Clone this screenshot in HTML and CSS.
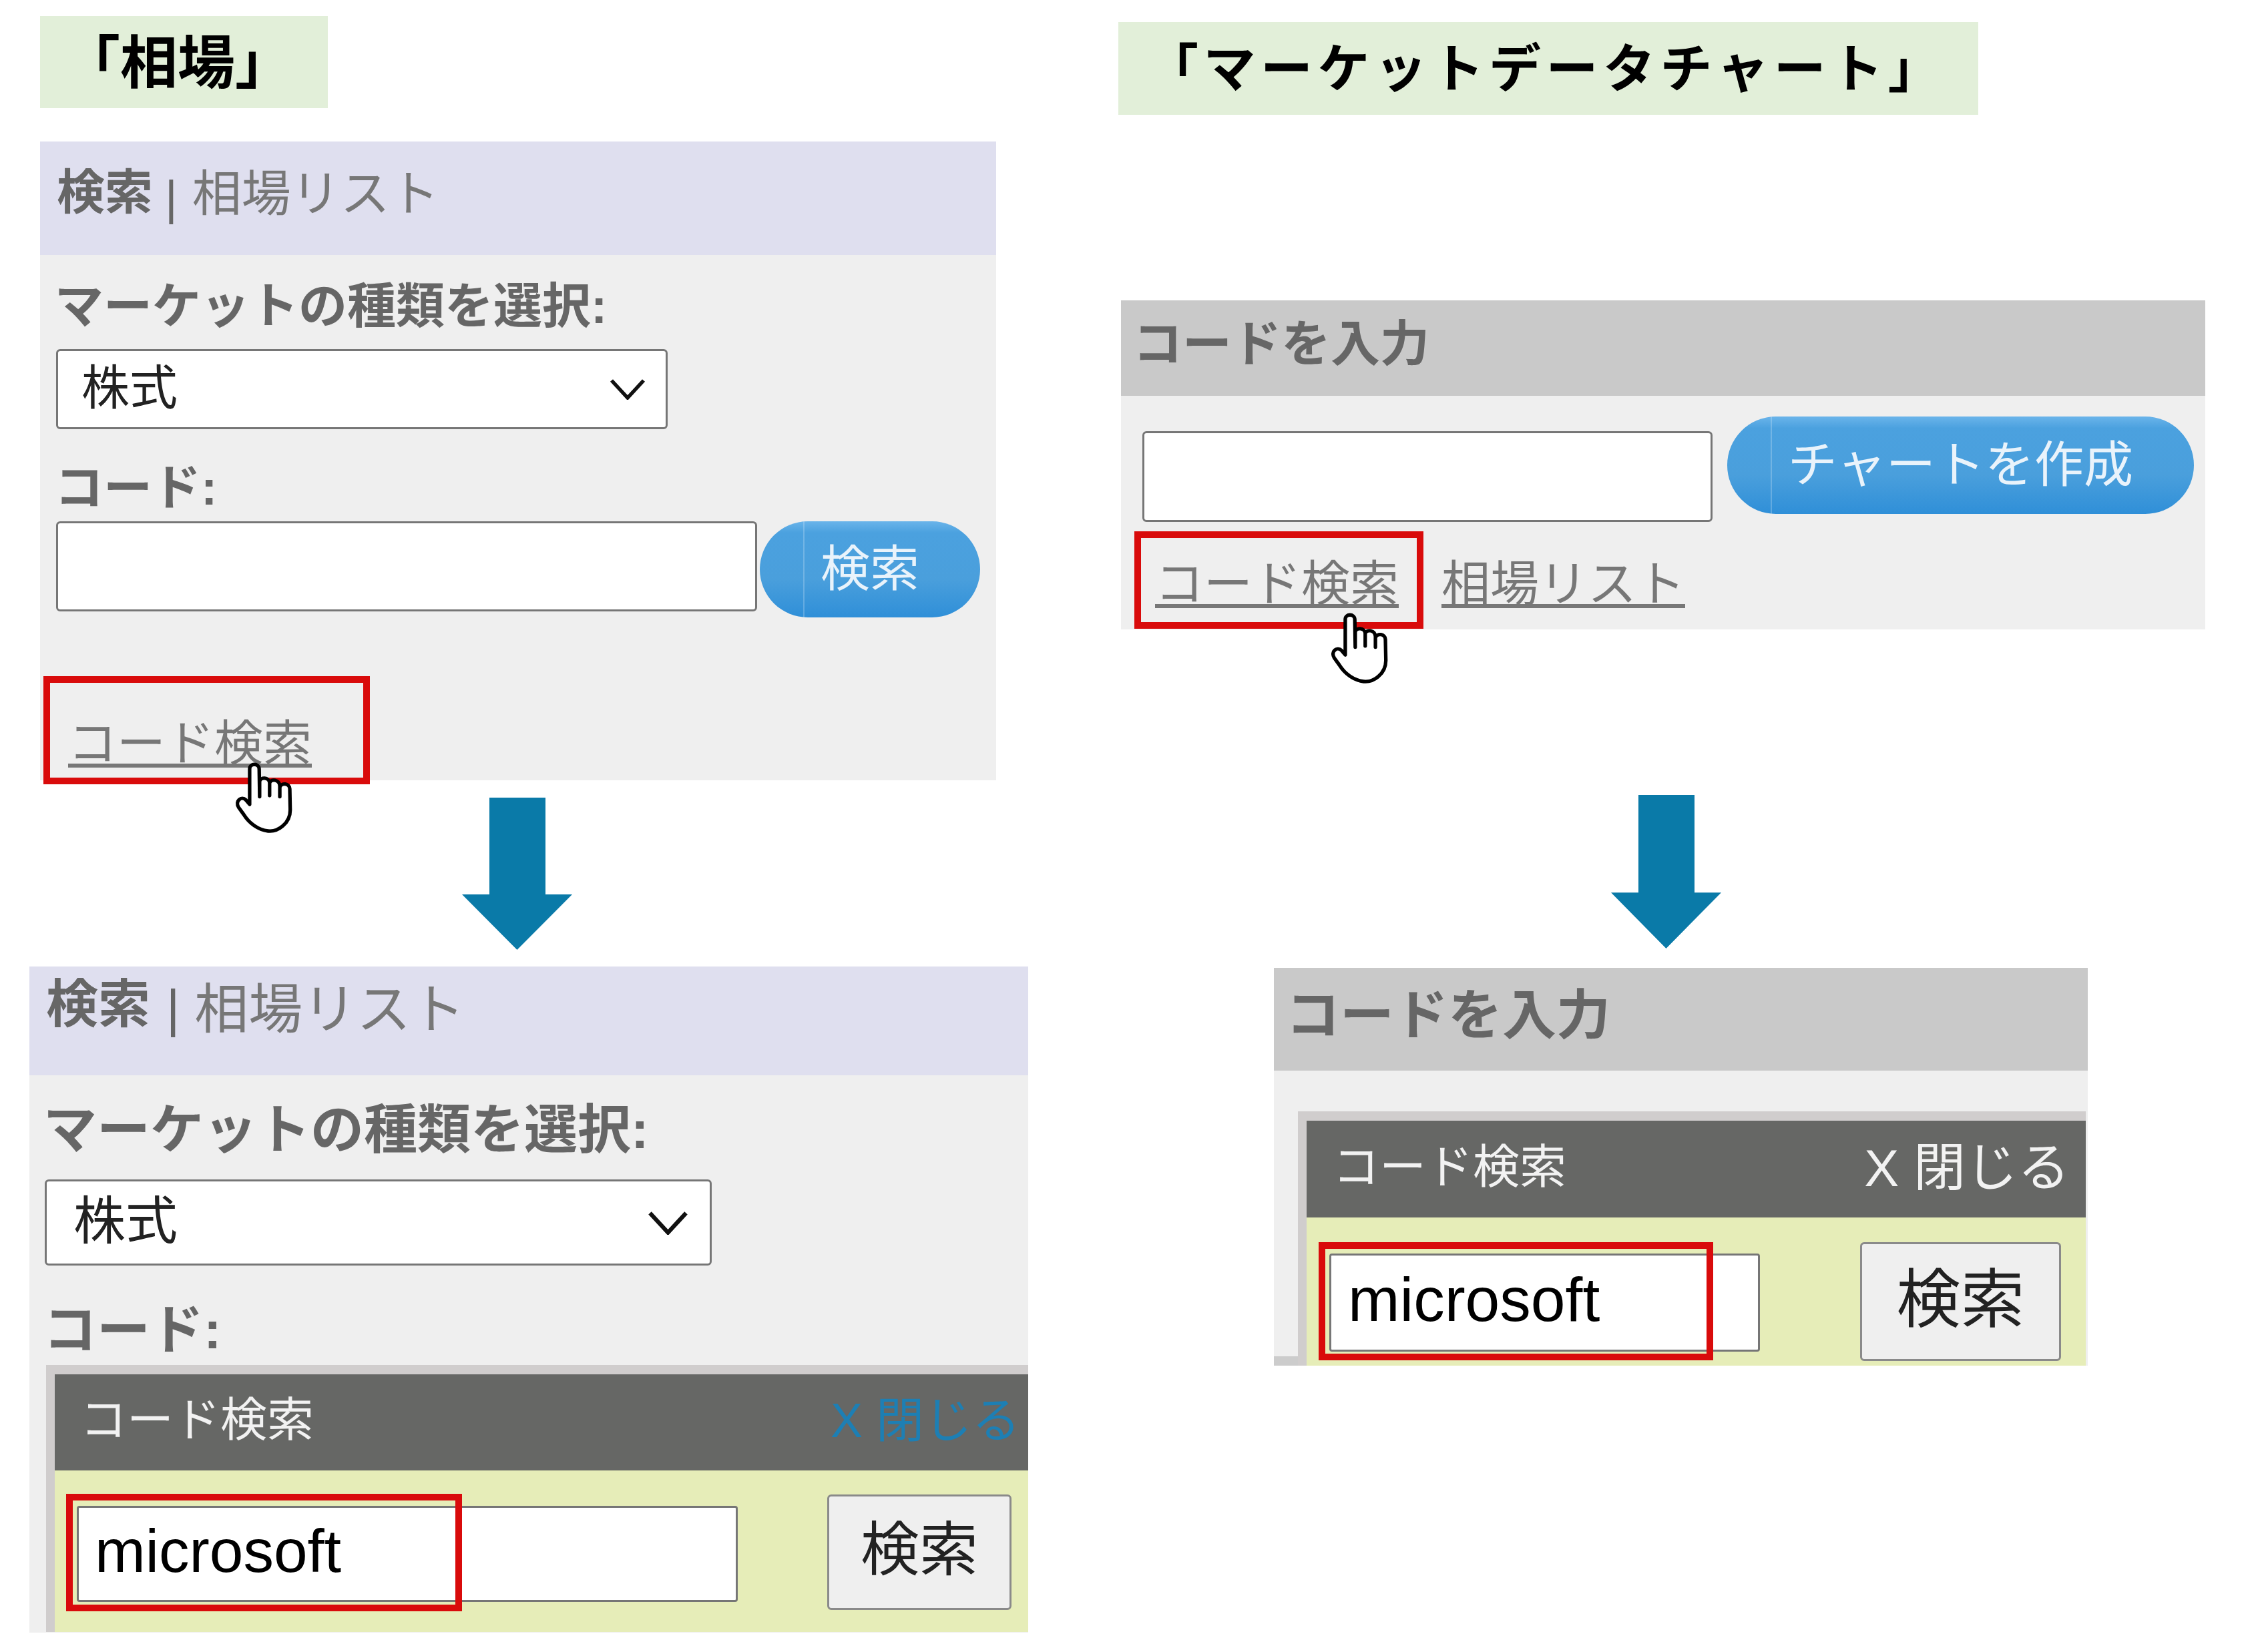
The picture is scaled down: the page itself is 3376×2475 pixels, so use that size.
FILE: index.html
```html
<!DOCTYPE html>
<html lang="ja">
<head>
<meta charset="utf-8">
<title>コード検索</title>
<link rel="stylesheet" href="styles.css">
</head>
<body>
<svg class="defs" width="0" height="0" aria-hidden="true">
  <symbol id="hand" viewBox="150 180 280 335">
    <path d="M222 375 L222 215 C222 188 264 188 265 215 L267 340 L267 272 C270 250 310 252 312 278 L312 335 L312 278 C318 258 356 262 358 292 L358 340 L358 298 C365 275 402 280 403 305 L405 400 C405 460 350 500 305 495 C260 490 220 460 195 420 L172 388 C155 360 185 335 205 355 Z" fill="#fff" stroke="#000" stroke-width="16" stroke-linejoin="round" stroke-linecap="round"/>
  </symbol>
  <symbol id="chevron" viewBox="0 0 54 32">
    <path d="M3 3 L27 29 L51 3" fill="none" stroke="#111" stroke-width="5.5"/>
  </symbol>
  <symbol id="arrow" viewBox="0 0 165 228" preserveAspectRatio="none">
    <path d="M41 0 H125 V145 H165 L82.500 228 L0 145 H41 Z" fill="#0a7aa8"/>
  </symbol>
</svg>
<main class="page">
  <section class="col">
    <h1 class="title title-a">「相場」</h1>

    <div class="panel panel-a">
      <div class="tabs tabs-a"><strong>検索</strong><span class="sep">|</span><span class="list">相場リスト</span></div>
      <div class="label label-a1">マーケットの種類を選択:</div>
      <div class="select select-a"><span>株式</span><svg class="chev"><use href="#chevron"/></svg></div>
      <div class="label label-a2">コード:</div>
      <div class="row">
        <input class="input input-a" type="text" aria-label="コード">
        <button class="pill pill-a" type="button">検索</button>
      </div>
      <div class="links links-a"><a class="link" href="#">コード検索</a></div>
      <div class="red red-a"></div>
      <svg class="hand hand-a"><use href="#hand"/></svg>
    </div>

    <svg class="arrow arrow-a"><use href="#arrow"/></svg>

    <div class="panel panel-b">
      <div class="tabs tabs-b"><strong>検索</strong><span class="sep">|</span><span class="list">相場リスト</span></div>
      <div class="label label-b1">マーケットの種類を選択:</div>
      <div class="select select-b"><span>株式</span><svg class="chev chev-b"><use href="#chevron"/></svg></div>
      <div class="label label-b2">コード:</div>
      <div class="modal modal-b">
        <div class="modal-head head-b"><span>コード検索</span><span class="close close-blue">X 閉じる</span></div>
        <div class="modal-body body-b">
          <div class="field field-b">microsoft</div>
          <button class="plain plain-b" type="button">検索</button>
        </div>
      </div>
      <div class="red red-b"></div>
    </div>
  </section>

  <section class="col">
    <h1 class="title title-c">「マーケットデータチャート」</h1>

    <div class="panel panel-c">
      <div class="bar bar-c">コードを入力</div>
      <div class="row row-c">
        <input class="input input-c" type="text" aria-label="コード">
        <button class="pill pill-c" type="button">チャートを作成</button>
      </div>
      <div class="links links-c"><a class="link" href="#">コード検索</a><a class="link" href="#">相場リスト</a></div>
      <div class="red red-c"></div>
      <svg class="hand hand-c"><use href="#hand"/></svg>
    </div>

    <svg class="arrow arrow-d"><use href="#arrow"/></svg>

    <div class="panel panel-d">
      <div class="bar bar-d">コードを入力</div>
      <div class="modal modal-d">
        <div class="modal-head head-d"><span>コード検索</span><span class="close">X 閉じる</span></div>
        <div class="modal-body body-d">
          <div class="field field-d">microsoft</div>
          <button class="plain plain-d" type="button">検索</button>
        </div>
      </div>
      <div class="red red-d"></div>
    </div>
  </section>
</main>
</body>
</html>
```
FILE: styles.css
```css
* { box-sizing: border-box; }
html, body { margin: 0; padding: 0; background: #fff; }
body { font-family: "Liberation Sans", "Noto Sans CJK JP", sans-serif; color: #666; }
.defs { position: absolute; }
.page { display: grid; grid-template-columns: 1600px 1776px; width: 3376px; height: 2475px; overflow: hidden; }
.col { display: flex; flex-direction: column; align-items: flex-start; min-width: 0; }

/* titles */
.title { margin: 0; background: #e2efd9; color: #000; font-weight: 700; display: flex; align-items: center; white-space: nowrap; }
.title-a { margin: 24px 0 0 60px; width: 431px; height: 138px; padding: 0 0 12px 34px; font-size: 86px; }
.title-c { margin: 33px 0 0 75px; width: 1288px; height: 139px; padding: 0 0 12px 42px; font-size: 78px; letter-spacing: 7.500px; }

/* panels */
.panel { position: relative; background: #efefef; flex: none; }
.panel-a { margin: 50px 0 0 60px; width: 1432px; height: 957px; padding: 0 24px; }
.panel-b { margin: 25px 0 0 44px; width: 1496px; height: 998px; padding-left: 23px; }
.panel-c { margin: 278px 0 0 79px; width: 1624px; height: 493px; }
.panel-d { margin: 29px 0 0 308px; width: 1219px; height: 596px; background: linear-gradient(#ccc, #ccc) left bottom / 36px 14px no-repeat, #efefef; }

.tabs { display: flex; align-items: flex-start; background: #dfdfef; line-height: 100px; color: #777; white-space: nowrap; }
.tabs strong { color: #666; }
.tabs-a { height: 170px; margin: 0 -24px; padding: 26px 0 0 25px; font-size: 72px; }
.tabs-b { height: 163px; margin-left: -23px; padding: 7px 0 0 25px; font-size: 78px; }
.sep { margin: 8px 22px 0 18px; font-weight: 400; color: #666; }
.list { margin-top: 3px; font-size: 74px; }
.tabs-b .sep { margin: 6px 22px 0 24px; }
.tabs-b .list { margin-top: 7px; font-size: 81px; }

.bar { background: #c9c9c9; line-height: 100px; font-weight: 700; color: #666; }
.bar-c { height: 143px; padding: 16px 0 0 18px; font-size: 74px; }
.bar-d { height: 154px; padding: 21px 0 0 18px; font-size: 81px; }

.label { font-weight: 700; font-size: 73px; line-height: 100px; color: #666; white-space: nowrap; margin-left: -2px; }
.label-a1 { margin-top: 27px; }
.label-a2 { margin-top: 38px; }
.label-b1 { margin-top: 32px; font-size: 80px; }
.label-b2 { margin-top: 47px; font-size: 80px; }

/* controls */
.select { display: flex; align-items: center; justify-content: space-between; background: #fff; border: 3px solid #767676; border-radius: 6px; color: #222; font-size: 72px; }
.select span { margin-bottom: 18px; }
.select-a { margin-top: 14px; width: 916px; height: 120px; padding: 0 30px 0 35px; }
.select-b { margin-top: 24px; width: 999px; height: 129px; padding: 0 32px 0 40px; font-size: 78px; }
.chev { width: 54px; height: 32px; flex: none; }
.chev-b { width: 61px; height: 36px; }

.row { display: flex; align-items: flex-start; }
.input { display: block; margin: 0; padding: 0; background: #fff; border: 3px solid #767676; border-radius: 6px; flex: none; }
.input-a { width: 1050px; height: 135px; }
.input-c { width: 854px; height: 136px; margin-top: 22px; }
.row-c { padding-left: 32px; margin-top: 31px; }

.pill { margin: 0; padding: 0 0 16px; border: 0; flex: none; border-radius: 80px; color: #e9f3fb; font: inherit; font-size: 74px; text-align: center; background: linear-gradient(rgba(255,255,255,.22), rgba(255,255,255,.22)) 65px 0 / 2px 100% no-repeat, linear-gradient(#6ab4ea 0%, #4ba1df 12%, #4a9fdc 60%, #2f8fd8 100%); }
.pill-a { width: 330px; height: 144px; margin-left: 4px; }
.pill-c { width: 699px; height: 146px; margin-left: 22px; }

.plain { margin: 0; padding: 0 0 24px; flex: none; background: #efefef; border: 3px solid #8a8a8a; border-radius: 6px; color: #222; font: inherit; }
.plain-b { width: 276px; height: 173px; margin-left: 134px; font-size: 88px; }
.plain-d { width: 301px; height: 178px; margin-left: 150px; font-size: 96px; }

.field { flex: none; background: #fff; border: 3px solid #767676; border-radius: 4px; color: #000; display: flex; align-items: center; padding-bottom: 8px; }
.field-b { width: 990px; height: 144px; margin-top: 17px; padding-left: 24px; font-size: 91px; }
.field-d { width: 645px; height: 147px; margin-top: 17px; padding-left: 25px; font-size: 93px; }

/* links */
.links { display: flex; font-size: 73px; line-height: 100px; }
.links-a { margin-top: 139px; padding-left: 18px; }
.links-c { margin-top: 43px; padding-left: 51px; gap: 64px; }
.link { color: #777; text-decoration: underline; text-decoration-thickness: 6px; text-underline-offset: 5px; text-decoration-skip-ink: none; }

/* modal */
.modal { background: #e6edb8; border-left: 13px solid #d0cdcd; border-top: 14px solid #d0cdcd; overflow: hidden; }
.modal-b { margin: 2px 0 0 2px; width: 1471px; height: 400px; }
.modal-d { margin: 61px 0 0 36px; width: 1180px; height: 381px; }
.modal-head { display: flex; align-items: center; justify-content: space-between; background: #666765; color: #f2f2f2; white-space: nowrap; }
.head-b { height: 144px; padding: 0 12px 20px 38px; font-size: 70px; }
.head-d { height: 145px; padding: 0 24px 18px 39px; font-size: 70px; }
.close { font-size: 78px; }
.head-b .close { font-size: 72px; }
.close-blue { color: #1d7fb4; }
.modal-body { display: flex; align-items: flex-start; }
.body-b { padding: 36px 0 0 33px; }
.body-d { padding: 37px 0 0 34px; }

/* overlays */
.red { position: absolute; border: 10px solid #d90b0b; }
.red-a { left: 5px; top: 801px; width: 489px; height: 162px; }
.red-b { left: 55px; top: 790px; width: 593px; height: 176px; }
.red-c { left: 20px; top: 346px; width: 433px; height: 146px; }
.red-d { left: 67px; top: 411px; width: 591px; height: 177px; }
.hand { position: absolute; width: 93px; height: 112px; }
.hand-a { left: 290px; top: 928px; }
.hand-c { left: 312px; top: 466px; }

.arrow { display: block; flex: none; width: 165px; }
.arrow-a { margin: 26px 0 0 692px; height: 228px; }
.arrow-d { margin: 248px 0 0 813px; height: 230px; }
```
